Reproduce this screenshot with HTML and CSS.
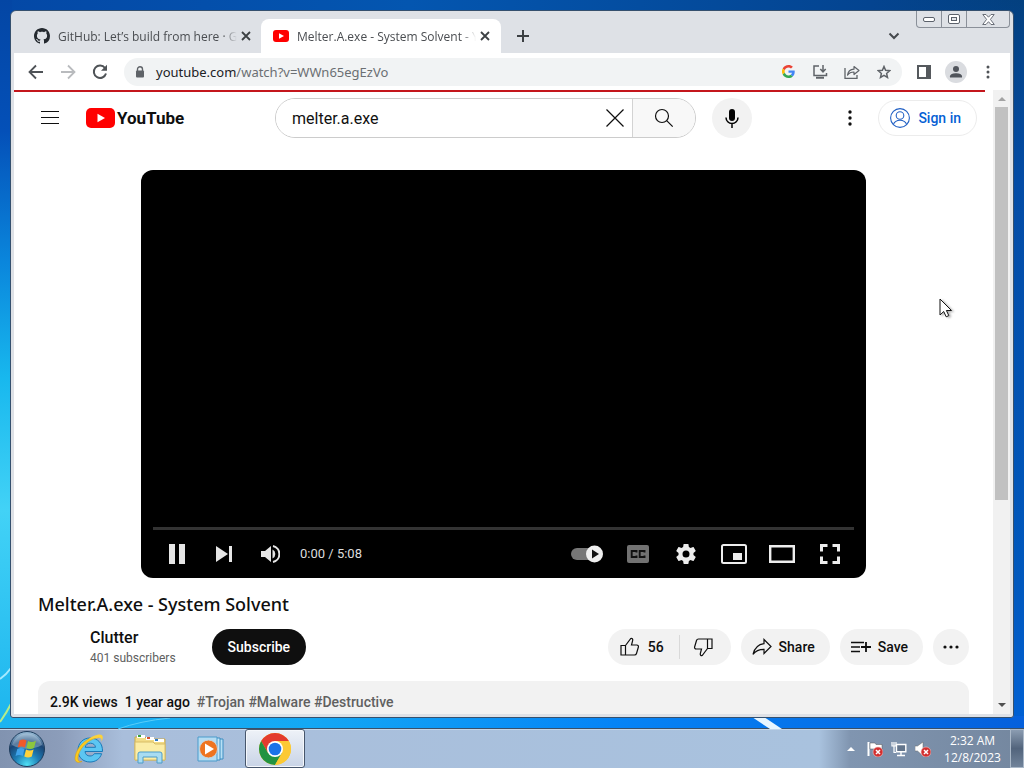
FILE: index.html
```html
<!DOCTYPE html>
<html lang="en">
<head>
    <meta charset="UTF-8">
    <meta name="viewport" content="width=device-width, initial-scale=1.0">
    <title>Melter.A.exe - System Solvent - YouTube</title>
    <link rel="stylesheet" href="styles.css">
</head>
<body>
<div class="desktop">
    <svg class="streaks" viewBox="0 0 1024 768" preserveAspectRatio="none" aria-hidden="true">
        <path d="M0 679q6-4 11-11" stroke="#a6eaff" stroke-width="2" fill="none"/>
        <path d="M0 722q7-10 12-20" stroke="#b4ec8c" stroke-width="2" fill="none"/>
        <path d="M118 729q22-8 52-11" stroke="#58cdf9" stroke-width="1" fill="none"/>
        <path d="M752 717h12l18 12h-12z" fill="#e8f6ff"/>
    </svg>
    <div class="window">
        <div class="tabstrip">
            <div class="tab">
                <svg width="16" height="16" viewBox="0 0 16 16"><path fill="#24292f" d="M8 0C3.58 0 0 3.58 0 8c0 3.54 2.29 6.53 5.47 7.59.4.07.55-.17.55-.38 0-.19-.01-.82-.01-1.49-2.01.37-2.53-.49-2.69-.94-.09-.23-.48-.94-.82-1.13-.28-.15-.68-.52-.01-.53.63-.01 1.08.58 1.23.82.72 1.21 1.87.87 2.33.66.07-.52.28-.87.51-1.07-1.78-.2-3.64-.89-3.64-3.95 0-.87.31-1.59.82-2.15-.08-.2-.36-1.02.08-2.12 0 0 .67-.21 2.2.82.64-.18 1.32-.27 2-.27s1.36.09 2 .27c1.53-1.04 2.2-.82 2.2-.82.44 1.1.16 1.92.08 2.12.51.56.82 1.27.82 2.15 0 3.07-1.87 3.75-3.65 3.95.29.25.54.73.54 1.48 0 1.07-.01 1.93-.01 2.2 0 .21.15.46.55.38A8.01 8.01 0 0 0 16 8c0-4.42-3.58-8-8-8z"/></svg>
                <span class="tab-title">GitHub: Let’s build from here · GitHub</span>
                <button class="tab-close" aria-label="Close tab"><svg width="10" height="10" viewBox="0 0 10 10"><path d="M1 1l8 8M9 1l-8 8" stroke="#3c4043" stroke-width="1.8"/></svg></button>
            </div>
            <div class="tab tab-active">
                <svg width="16" height="16" viewBox="0 0 16 16"><rect y="2" width="16" height="12" rx="3" fill="#f00"/><path d="M6 5.300l5 2.700-5 2.700z" fill="#fff"/></svg>
                <span class="tab-title">Melter.A.exe - System Solvent - YouTube</span>
                <button class="tab-close" aria-label="Close tab"><svg width="10" height="10" viewBox="0 0 10 10"><path d="M1 1l8 8M9 1l-8 8" stroke="#3c4043" stroke-width="1.8"/></svg></button>
            </div>
            <button class="tab-new" aria-label="New tab"><svg width="12" height="12" viewBox="0 0 12 12"><path d="M6 0v12M0 6h12" stroke="#3c4043" stroke-width="2"/></svg></button>
            <button class="tab-search" aria-label="Search tabs"><svg width="12" height="8" viewBox="0 0 12 8"><path d="M1.500 1.500l4.500 4.500 4.500-4.500" stroke="#45494d" stroke-width="2" fill="none"/></svg></button>
        </div>
        <div class="window-controls">
            <button aria-label="Minimize"><svg width="12" height="5" viewBox="0 0 12 5"><rect x=".5" y=".5" width="11" height="4" rx="1.500" fill="#fff" stroke="#5b616b"/></svg></button>
            <button aria-label="Restore"><svg width="12" height="10" viewBox="0 0 12 10"><rect x=".5" y=".5" width="11" height="9" rx="1.500" fill="#fff" stroke="#5b616b"/><rect x="3.500" y="3.500" width="5" height="3" fill="#e4e6ea" stroke="#5b616b"/></svg></button>
            <button class="win-close" aria-label="Close"><svg width="13" height="11" viewBox="0 0 13 11"><path d="M.8.5h3.200l2.500 2.700L9 .5h3.200L8.400 5.400l3.900 5.100H9L6.500 7.700 4 10.500H.7l3.900-5.100z" fill="#fff" stroke="#5b616b" stroke-width=".9"/></svg></button>
        </div>
        <div class="toolbar">
            <button class="nav-btn" aria-label="Back"><svg width="16" height="16" viewBox="0 0 16 16"><path d="M15 8H2M8 1.500L1.500 8 8 14.500" stroke="#4f5357" stroke-width="1.800" fill="none"/></svg></button>
            <button class="nav-btn" aria-label="Forward" disabled><svg width="16" height="16" viewBox="0 0 16 16"><path d="M1 8h13M8 1.500L14.500 8 8 14.500" stroke="#b9bbbe" stroke-width="1.800" fill="none"/></svg></button>
            <button class="nav-btn" aria-label="Reload"><svg width="16" height="16" viewBox="0 0 16 16"><path d="M13 4A6.200 6.200 0 1 0 14 9.500" stroke="#4f5357" stroke-width="2" fill="none"/><path d="M15 .8v6H9z" fill="#4f5357"/></svg></button>
            <div class="omnibox">
                <svg width="10" height="12" viewBox="0 0 10 12"><path d="M2.500 5V3.200a2.500 2.500 0 0 1 5 0V5" stroke="#5f6368" stroke-width="1.400" fill="none"/><rect x="1" y="4.500" width="8" height="7" rx="1" fill="#5f6368"/></svg>
                <div class="url" role="textbox" aria-label="Address">youtube.com<span class="url-path">/watch?v=WWn65egEzVo</span></div>
                <button class="omni-btn" aria-label="Search with Google"><svg width="13" height="13" viewBox="0 0 48 48"><path fill="#ea4335" d="M24 9.500c3.540 0 6.710 1.220 9.210 3.600l6.850-6.850C35.900 2.380 30.470 0 24 0 14.620 0 6.510 5.380 2.560 13.220l7.980 6.190C12.430 13.720 17.740 9.500 24 9.500z"/><path fill="#4285f4" d="M46.980 24.550c0-1.570-.15-3.090-.38-4.550H24v9.020h12.940c-.58 2.960-2.260 5.480-4.780 7.180l7.730 6c4.510-4.180 7.090-10.360 7.090-17.650z"/><path fill="#fbbc05" d="M10.530 28.590a14.500 14.500 0 0 1 0-9.180l-7.980-6.190a24 24 0 0 0 0 21.560z"/><path fill="#34a853" d="M24 48c6.480 0 11.930-2.130 15.890-5.810l-7.730-6c-2.150 1.450-4.920 2.300-8.160 2.300-6.260 0-11.570-4.220-13.470-9.910l-7.980 6.190C6.510 42.620 14.620 48 24 48z"/></svg></button>
                <button class="omni-btn" aria-label="Install app"><svg width="16" height="14" viewBox="0 0 16 14"><path d="M7 1H2v9.500h12.500V8" stroke="#5f6368" stroke-width="1.500" fill="none"/><path d="M4 12.800h8" stroke="#5f6368" stroke-width="2"/><path d="M11 0v6M8.300 4L11 6.800 13.700 4" stroke="#5f6368" stroke-width="1.500" fill="none"/></svg></button>
                <button class="omni-btn" aria-label="Share this page"><svg width="16" height="14" viewBox="0 0 16 14"><path d="M1 3v10.300h12V10" stroke="#5f6368" stroke-width="1.300" fill="none"/><path d="M3.500 10.200C4 6.500 6.500 4.300 10 4.200V1.500l5 4-5 4V7c-3 0-5 1-6.500 3.200z" stroke="#5f6368" stroke-width="1.200" fill="none" stroke-linejoin="round"/></svg></button>
                <button class="omni-btn" aria-label="Bookmark"><svg width="14" height="14" viewBox="0 0 14 14"><path d="M7 1.500l1.600 3.800 4.100.4-3.100 2.700.9 4L7 10.300l-3.500 2.100.9-4L1.300 5.700l4.100-.4z" stroke="#5f6368" stroke-width="1.500" fill="none"/></svg></button>
            </div>
            <button class="nav-btn" aria-label="Side panel"><svg width="14" height="14" viewBox="0 0 14 14"><rect x="1" y="1" width="12" height="12" fill="#fff" stroke="#55595d" stroke-width="2"/><path d="M9 0h5v14H9z" fill="#55595d"/></svg></button>
            <button class="nav-btn" aria-label="Profile"><svg width="22" height="22" viewBox="0 0 22 22"><circle cx="11" cy="11" r="11" fill="#dadce0"/><circle cx="11" cy="8" r="3" fill="#51555c"/><path d="M5 16.500v-1.200C5 13 8.500 12.200 11 12.200s6 .8 6 3.100v1.200z" fill="#51555c"/></svg></button>
            <button class="nav-btn" aria-label="Menu"><svg width="4" height="14" viewBox="0 0 4 14"><g fill="#4f5357"><circle cx="2" cy="2" r="1.500"/><circle cx="2" cy="7" r="1.500"/><circle cx="2" cy="12" r="1.500"/></g></svg></button>
        </div>
        <div class="viewport">
            <div class="page">
                <div class="load-bar"></div>
                <header class="masthead">
                    <button class="guide" aria-label="Guide"><svg width="18" height="14" viewBox="0 0 18 14"><path d="M0 .5h18M0 6.500h18M0 12.500h18" stroke="#0f0f0f"/></svg></button>
                    <a class="logo" href="#" aria-label="YouTube home">
                        <svg width="29" height="20" viewBox="0 0 29 20"><rect width="29" height="20" rx="5" fill="#f00"/><path d="M11.500 5.700l7.500 4.300-7.500 4.300z" fill="#fff"/></svg>
                        <span class="logo-text">YouTube</span>
                    </a>
                    <form class="search">
                        <input class="search-input" type="text" value="melter.a.exe" aria-label="Search">
                        <button class="search-clear" type="button" aria-label="Clear"><svg width="18" height="18" viewBox="0 0 18 18"><path d="M.5.5l17 17M17.500.5l-17 17" stroke="#0f0f0f" stroke-width="1.200"/></svg></button>
                        <button class="search-submit" type="button" aria-label="Search"><svg width="20" height="20" viewBox="0 0 20 20"><circle cx="8" cy="8" r="6.500" stroke="#0f0f0f" stroke-width="1.200" fill="none"/><path d="M12.700 12.700l6 6" stroke="#0f0f0f" stroke-width="1.200"/></svg></button>
                    </form>
                    <button class="mic" aria-label="Search with your voice"><svg width="14" height="19" viewBox="0 0 14 19"><rect x="4" width="6" height="12" rx="3" fill="#030303"/><path d="M1 8.500a6 6 0 0 0 12 0M7 14.500V19" stroke="#030303" stroke-width="1.500" fill="none"/></svg></button>
                    <button class="settings" aria-label="Settings"><svg width="4" height="16" viewBox="0 0 4 16"><g fill="#0f0f0f"><circle cx="2" cy="2" r="1.700"/><circle cx="2" cy="8" r="1.700"/><circle cx="2" cy="14" r="1.700"/></g></svg></button>
                    <a class="sign-in" href="#">
                        <svg width="20" height="20" viewBox="0 0 20 20"><g stroke="#2160c4" fill="none" stroke-width="1.100"><circle cx="10" cy="10" r="9.400"/><circle cx="10" cy="7.500" r="3.800"/><path d="M3.300 16.600c1.200-3 3.800-4.300 6.700-4.300s5.500 1.300 6.700 4.300"/></g></svg>
                        Sign in
                    </a>
                </header>
                <div class="player">
                    <div class="progress"></div>
                    <div class="controls">
                        <button aria-label="Pause"><svg width="16" height="20" viewBox="0 0 16 20"><path d="M0 0h6v20H0zM10 0h6v20h-6z" fill="#e6e6e6"/></svg></button>
                        <button aria-label="Next"><svg width="16" height="16" viewBox="0 0 16 16"><path d="M0 0l12 8-12 8zM13 0h3v16h-3z" fill="#e6e6e6"/></svg></button>
                        <button aria-label="Mute"><svg width="19" height="18" viewBox="0 0 19 18"><path d="M0 6v6h4l6 5V1L4 6z" fill="#e6e6e6"/><path d="M11.500 4.500v9a5 5 0 0 0 0-9z" fill="#e6e6e6"/><path d="M12 1a8.200 8.200 0 0 1 0 16" stroke="#e6e6e6" stroke-width="2" fill="none"/></svg></button>
                        <span class="time">0:00 / 5:08</span>
                        <button class="push" aria-label="Autoplay"><svg width="34" height="18" viewBox="0 0 34 18"><rect x="1" y="3" width="28" height="12" rx="6" fill="#777"/><circle cx="24.500" cy="9" r="8.500" fill="#efefef"/><path d="M22 4.500L29 9l-7 4.500z" fill="#111"/></svg></button>
                        <button aria-label="Subtitles"><svg width="22" height="18" viewBox="0 0 22 18"><rect width="22" height="18" rx="2" fill="#727272"/><path d="M9.500 7.500V6H4.700v6h4.800v-1.500M17.500 7.500V6h-4.800v6h4.800v-1.500" stroke="#111" stroke-width="1.900" fill="none"/></svg></button>
                        <button aria-label="Settings"><svg width="20" height="20" viewBox="2 2 20 20"><path fill="#ededed" d="M19.430 12.980c.04-.32.07-.64.07-.98s-.03-.66-.07-.98l2.110-1.650c.19-.15.240-.42.120-.64l-2-3.460c-.12-.22-.39-.3-.61-.22l-2.490 1c-.52-.4-1.080-.73-1.690-.98l-.38-2.650C14.460 2.180 14.250 2 14 2h-4c-.25 0-.46.18-.49.42l-.38 2.650c-.61.25-1.170.59-1.690.98l-2.490-1c-.23-.09-.49 0-.61.22l-2 3.460c-.13.22-.07.490.12.640l2.110 1.650c-.04.32-.07.65-.07.98s.03.66.07.98l-2.110 1.650c-.19.15-.24.42-.12.64l2 3.460c.12.22.39.3.61.22l2.490-1c.52.4 1.080.73 1.690.98l.38 2.650c.03.24.24.42.49.42h4c.25 0 .46-.18.49-.42l.38-2.650c.61-.25 1.170-.59 1.690-.98l2.490 1c.23.09.49 0 .61-.22l2-3.460c.12-.22.07-.49-.12-.64zM12 15.500a3.500 3.500 0 1 1 0-7 3.500 3.500 0 0 1 0 7z"/></svg></button>
                        <button aria-label="Miniplayer"><svg width="26" height="20" viewBox="0 0 26 20"><rect x="1" y="1" width="24" height="18" rx="1.500" stroke="#ededed" stroke-width="2" fill="none"/><path d="M12 9h9v7h-9z" fill="#ededed"/></svg></button>
                        <button aria-label="Theater mode"><svg width="26" height="18" viewBox="0 0 26 18"><path d="M1.200 1.200h23.600v15.600H1.200z" stroke="#ededed" stroke-width="2.400" fill="none"/></svg></button>
                        <button aria-label="Full screen"><svg width="20" height="20" viewBox="0 0 20 20"><path d="M1.500 7.500v-6h6M12.500 1.500h6v6M18.500 12.500v6h-6M7.500 18.500h-6v-6" stroke="#ededed" stroke-width="3" fill="none"/></svg></button>
                    </div>
                </div>
                <h1 class="video-title">Melter.A.exe - System Solvent</h1>
                <div class="meta">
                    <div class="owner">
                        <a class="channel" href="#">Clutter</a>
                        <span class="subs">401 subscribers</span>
                    </div>
                    <button class="subscribe">Subscribe</button>
                    <div class="actions">
                        <div class="rating">
                            <button class="like"><svg width="20" height="20" viewBox="0 0 20 20"><path d="M1 8.500h4.500v9.500H1zM5.500 8.500l5.300-7c1.200-.5 2.200.5 1.900 1.800L11.500 8h5.300c1.200 0 1.900 1 1.600 2l-1.900 6.500c-.3 1-1 1.500-2 1.500h-9" stroke="#0f0f0f" stroke-width="1.200" fill="none"/></svg>56</button>
                            <button class="dislike" aria-label="Dislike"><svg width="20" height="20" viewBox="0 0 20 20"><path d="M19 11.500h-4.500V2H19zM14.500 11.500l-5.300 7c-1.200.5-2.200-.5-1.900-1.800L8.500 12H3.200c-1.200 0-1.900-1-1.600-2l1.900-6.500C3.800 2.500 4.500 2 5.500 2h9" stroke="#0f0f0f" stroke-width="1.200" fill="none"/></svg></button>
                        </div>
                        <button class="pill"><svg width="20" height="18" viewBox="0 0 20 18"><path d="M12 1.500l7 7-7 7v-4.200c-5 0-8.500 1.500-11 5C2.500 10.500 5.500 6.500 12 5.700z" stroke="#0f0f0f" stroke-width="1.200" fill="none"/></svg>Share</button>
                        <button class="pill"><svg width="20" height="14" viewBox="0 0 20 14"><path d="M0 2.500h13M0 7h9M0 11.500h9" stroke="#0f0f0f" stroke-width="1.300"/><path d="M15 2v10M10 7h10" stroke="#0f0f0f" stroke-width="1.800"/></svg>Save</button>
                        <button class="more" aria-label="More actions"><svg width="16" height="4" viewBox="0 0 16 4"><g fill="#0f0f0f"><circle cx="2" cy="2" r="1.600"/><circle cx="8" cy="2" r="1.600"/><circle cx="14" cy="2" r="1.600"/></g></svg></button>
                    </div>
                </div>
                <div class="description">
                    <span>2.9K views</span>
                    <span>1 year ago</span>
                    <span class="hashtags"><a href="#">#Trojan</a> <a href="#">#Malware</a> <a href="#">#Destructive</a></span>
                </div>
            </div>
            <div class="scrollbar" aria-hidden="true">
                <svg width="8" height="4" viewBox="0 0 8 4"><path d="M0 4l4-4 4 4z" fill="#a3a3a3"/></svg>
                <div class="track"><div class="thumb"></div></div>
                <svg width="8" height="4" viewBox="0 0 8 4"><path d="M0 0l4 4 4-4z" fill="#505050"/></svg>
            </div>
        </div>
    </div>
    <svg class="cursor" width="16" height="22" viewBox="0 0 16 22" aria-hidden="true"><path d="M1 1v16l3.700-3.500 2.500 5.300 2.600-1.200-2.400-5.100h5.100z" fill="#fff" stroke="#111"/></svg>
</div>
<footer class="taskbar">
    <button class="start" aria-label="Start">
        <svg width="38" height="38" viewBox="0 0 38 38">
            <defs>
                <radialGradient id="orb" cx=".5" cy=".95" r=".9"><stop offset="0" stop-color="#4fe0f5"/><stop offset=".4" stop-color="#1d7db5"/><stop offset=".75" stop-color="#1a4474"/><stop offset="1" stop-color="#8fb3cf"/></radialGradient>
            </defs>
            <circle cx="19" cy="19" r="17.500" fill="url(#orb)" stroke="#1d3c5c"/>
            <path d="M4 15a15.500 15.500 0 0 1 30 0c-9 5-21 5-30 0z" fill="#d5e6f2" opacity=".35"/>
            <path d="M11.500 10.500c2.500-1.500 5-1.500 7 0l-1.600 7c-2.300-1.300-4.700-1.300-7.200 0z" fill="#f0592a"/>
            <path d="M20 11c2.500 1.300 5 1.200 8-.3l-2 7.300c-2.500 1.300-5 1.300-7.600 0z" fill="#8cc63f"/>
            <path d="M9.300 19c2.500-1.400 5-1.300 7.200 0l-1.800 7c-2.200-1.400-4.700-1.400-7.200 0z" fill="#3fa2ea"/>
            <path d="M18 19.600c2.500 1.300 5 1.300 7.600 0l-1.800 7c-2.500 1.400-5 1.300-7.500 0z" fill="#ffd23a"/>
        </svg>
    </button>
    <button class="task" aria-label="Internet Explorer">
        <svg width="32" height="32" viewBox="0 0 32 32">
            <path d="M29.500 18.500H12c.3 3 2.300 4.500 5 4.500 2 0 3.400-.8 4.300-2.300h7.300C27 26 22.500 29 17 29 10 29 5 24.300 5 17.300S10 5 17 5c8 0 12.800 5.500 12.500 13.500zM12.200 14.300h10.300c-.3-2.500-2.300-4.100-5.100-4.100s-4.800 1.600-5.200 4.100z" fill="#5cc6f2" stroke="#1b79b8"/>
            <path d="M7 18C11 11 18 5.500 26 4.500c-2-1-5-.8-8 .2C9 8.500 2.500 17.500 2 25c-.1 4 2.500 5.500 7 3.500-4.500.5-5.500-3-2-10.500z" fill="#fbc91e" stroke="#d39a10" stroke-width=".5"/>
            <path d="M24 5c3-1 5 0 4.500 3.500C31 4 30 1 25.500 1.500 22 2 18 4 15 6.500 18 5.500 21 5 24 5z" fill="#fbd23c"/>
        </svg>
    </button>
    <button class="task" aria-label="Windows Explorer">
        <svg width="32" height="30" viewBox="0 0 32 30">
            <path d="M1 3h10l2 2h18v21H1z" fill="#f2dc86" stroke="#c9a94e"/>
            <path d="M3 1h8v3H3z" fill="#fff"/><path d="M4 1h3v2H4z" fill="#3aa33a"/>
            <path d="M12 3h8v3h-8z" fill="#fff"/><path d="M13 3h3v2h-3z" fill="#d9512c"/>
            <path d="M20 5h10v3H20z" fill="#fff"/><path d="M21 5h3v2h-3z" fill="#2f7cc9"/>
            <path d="M1 8h18l2 2h10v16H1z" fill="#fbeda6" stroke="#d8bd66"/>
            <path d="M4 29V20q0-2 2-2h20q2 0 2 2v9h-5v-6H9v6z" fill="#a8dcf2" stroke="#4d9cc9"/>
        </svg>
    </button>
    <button class="task" aria-label="Windows Media Player">
        <svg width="28" height="26" viewBox="0 0 28 26">
            <path d="M8 3h18v20H8z" fill="#b8e0f5" stroke="#3d8ec2"/><path d="M5 2h18v22H5z" fill="#c5e6f7" stroke="#3d8ec2"/><path d="M1 1h19v24H1z" fill="#b5dcf2" stroke="#4b9bcb"/>
            <circle cx="11.500" cy="13" r="9" fill="#ee7420" stroke="#c9d2d9"/><path d="M8 7.500l9 5.500-9 5.500z" fill="#fff"/>
        </svg>
    </button>
    <button class="task task-active" aria-label="Google Chrome">
        <svg width="32" height="32" viewBox="0 0 48 48">
            <circle cx="24" cy="24" r="24" fill="#ffca28"/>
            <path d="M24 12h20.780A24 24 0 0 0 3.220 12l10.390 18z" fill="#e33b2e"/>
            <path d="M13.610 30L3.220 12A24 24 0 0 0 24 48l10.390-18z" fill="#229342"/>
            <path d="M24 12h20.780A24 24 0 0 1 24 48l10.390-18z" fill="#fcc934"/>
            <circle cx="24" cy="24" r="12" fill="#fff"/><circle cx="24" cy="24" r="9.500" fill="#1a73e8"/>
        </svg>
    </button>
    <div class="tray">
        <button aria-label="Show hidden icons"><svg width="8" height="4" viewBox="0 0 8 4"><path d="M0 4l4-4 4 4z" fill="#fff"/></svg></button>
        <button aria-label="Action Center"><svg width="16" height="16" viewBox="0 0 16 16"><path d="M1.500 1v14" stroke="#fff" stroke-width="2"/><path d="M3 2h5l1 1.500h6V9H9L8 8H3z" fill="#fff" stroke="#555" stroke-width=".5"/><circle cx="11" cy="11" r="5" fill="#d32f2f" stroke="#f2c4c4" stroke-width=".6"/><path d="M9 9l4 4M13 9l-4 4" stroke="#fff" stroke-width="1.500"/></svg></button>
        <button aria-label="Network"><svg width="16" height="16" viewBox="0 0 16 16"><path d="M5.500 3.500h9.300v7.300H5.500zM10 11v3M6 14.500h8" stroke="#fff" stroke-width="1.400" fill="#63758c"/><path d="M1 1v4h4V1M3 1v4M3 5v6.500h2" stroke="#fff" stroke-width="1.200" fill="none"/></svg></button>
        <button aria-label="Volume"><svg width="16" height="16" viewBox="0 0 16 16"><path d="M0 5v5h2.500L8 15V1L2.500 5z" fill="#fff" stroke="#666" stroke-width=".5"/><circle cx="11" cy="11" r="5" fill="#d32f2f" stroke="#f2c4c4" stroke-width=".6"/><path d="M9 9l4 4M13 9l-4 4" stroke="#fff" stroke-width="1.500"/></svg></button>
    </div>
    <div class="clock"><span>2:32 AM</span><span>12/8/2023</span></div>
    <button class="show-desktop" aria-label="Show desktop"></button>
</footer>
</body>
</html>
```
FILE: styles.css
```css
* {
    box-sizing: border-box;
}

body {
    margin: 0;
    height: 100vh;
    display: flex;
    flex-direction: column;
    overflow: hidden;
    font-family: Roboto, "Liberation Sans", sans-serif;
    color: #0f0f0f;
}

button {
    display: flex;
    align-items: center;
    justify-content: center;
    padding: 0;
    border: none;
    background: none;
    font: inherit;
    color: inherit;
}

a {
    color: inherit;
    text-decoration: none;
}

svg {
    flex: none;
}

/* desktop */
.desktop {
    position: relative;
    flex: 1;
    min-height: 0;
    padding: 10px;
    background:
        linear-gradient(to right, #1cb4f0, #14a8f4 30%, #0584f6 60%, #0560dc) bottom / 100% 12px no-repeat,
        linear-gradient(to bottom, #0446a4, #0450b8 18%, #0a86dc 36%, #18b8ee 52%, #42d2f6 70%, #1cb4ee) left / 12px 100% no-repeat,
        linear-gradient(to right, #0448a6, #0456b0 40%, #044490 85%, transparent) top / 100% 12px no-repeat,
        linear-gradient(to bottom, #03407f, #044ca6 25%, #0058be 80%, #0060d4);
}

.streaks {
    position: absolute;
    left: 0;
    top: 0;
    width: 100vw;
    height: 100vh;
}

.window {
    position: relative;
    height: 100%;
    display: flex;
    flex-direction: column;
    padding: 0 3px 3px;
    border: 1px solid #35506e;
    border-radius: 6px 6px 3px 3px;
    background: #dee1e6;
    overflow: hidden;
}

.tabstrip {
    display: flex;
    height: 42px;
    padding: 8px 110px 0 12px;
    font-family: "Open Sans", "Noto Sans", sans-serif;
    font-size: 12px;
    color: #4a4d51;
}

.tab {
    display: flex;
    align-items: center;
    gap: 8px;
    width: 235px;
    padding: 0 10px 0 8px;
}

.tab-active {
    width: 240px;
    padding: 0 11px 0 12px;
    border-radius: 8px 8px 0 0;
    background: #fff;
}

.tab-title {
    flex: 1;
    margin-right: -4px;
    overflow: hidden;
    white-space: nowrap;
    -webkit-mask-image: linear-gradient(to right, #000 92%, transparent);
    mask-image: linear-gradient(to right, #000 92%, transparent);
}

.tab-new {
    width: 44px;
}

.tab-search {
    margin-left: auto;
}

.window-controls {
    position: absolute;
    top: 0;
    right: 3px;
    display: flex;
    height: 17px;
    border: 1px solid #8a9099;
    border-top: none;
    border-radius: 0 0 4px 4px;
}

.window-controls button {
    width: 25px;
    border-right: 1px solid #8a9099;
}

.window-controls .win-close {
    width: 42px;
    border-right: none;
}

.toolbar {
    display: flex;
    align-items: center;
    height: 37px;
    padding: 0 6px;
    background: #fff;
}

.nav-btn {
    width: 32px;
    height: 28px;
}

.omnibox {
    flex: 1;
    display: flex;
    align-items: center;
    height: 28px;
    margin: 0 6px 0 8px;
    padding: 0 2px 0 11px;
    border-radius: 14px;
    background: #f1f3f4;
}

.url {
    flex: 1;
    margin-left: 11px;
    font-family: "Noto Sans", "Open Sans", sans-serif;
    font-size: 13px;
    color: #202124;
}

.url-path {
    color: #6b6f73;
}

.omni-btn {
    width: 32px;
    height: 28px;
}

/* page area */
.viewport {
    flex: 1;
    display: flex;
    min-height: 0;
    background: #fff;
}

.page {
    flex: 1;
    min-width: 0;
    overflow: hidden;
}

.load-bar {
    height: 2px;
    margin-right: 8px;
    background: #c4161c;
}

.masthead {
    display: flex;
    align-items: center;
    height: 52px;
    padding: 0 16px 0 27px;
}

.guide {
    width: 18px;
    height: 40px;
}

.logo {
    display: flex;
    align-items: center;
    gap: 2px;
    width: 92px;
    margin-left: 27px;
}

.logo-text {
    font-size: 17px;
    font-weight: 700;
    line-height: 20px;
}

.search {
    flex: 1;
    display: flex;
    height: 40px;
    margin-left: 97px;
    border: 1px solid #ccc;
    border-radius: 20px;
    overflow: hidden;
}

.search-input {
    flex: 1;
    min-width: 0;
    padding: 0 0 0 16px;
    border: none;
    outline: none;
    font: 16px Roboto, sans-serif;
    color: #111;
}

.search-clear {
    width: 34px;
}

.search-submit {
    width: 63px;
    border-left: 1px solid #d3d3d3;
    background: #f8f8f8;
}

.mic {
    width: 40px;
    height: 40px;
    margin-left: 16px;
    border-radius: 50%;
    background: #f2f2f2;
}

.settings {
    width: 40px;
    height: 40px;
    margin: 0 8px 0 78px;
}

.sign-in {
    display: flex;
    align-items: center;
    gap: 8px;
    height: 36px;
    padding: 0 15px 0 11px;
    border: 1px solid #ececec;
    border-radius: 18px;
    font-size: 14px;
    font-weight: 500;
    color: #065fd4;
}

.player {
    display: flex;
    flex-direction: column;
    justify-content: flex-end;
    aspect-ratio: 16 / 9;
    margin: 26px 127px 0;
    padding: 0 12px;
    border-radius: 12px;
    background: #000;
}

.progress {
    height: 3px;
    background: #333;
}

.controls {
    display: flex;
    align-items: center;
    height: 48px;
    color: #ddd;
}

.controls button {
    width: 47px;
    height: 48px;
}

.controls .push {
    width: 54px;
    margin-left: auto;
}

.controls .push ~ button {
    width: 48px;
}

.time {
    margin-left: 6px;
    font-size: 13px;
}

.video-title {
    margin: 12px 24px 0;
    font-family: "Noto Sans", "Open Sans", sans-serif;
    font-size: 18px;
    font-weight: 500;
    line-height: 28px;
}

.meta {
    display: flex;
    align-items: center;
    margin: 9px 24px 0;
    height: 40px;
    font-size: 14px;
    font-weight: 500;
}

.owner {
    display: flex;
    flex-direction: column;
    margin-left: 52px;
}

.channel {
    font-size: 16px;
    line-height: 22px;
}

.subs {
    font-size: 12px;
    font-weight: 400;
    line-height: 18px;
    color: #606060;
}

.subscribe {
    height: 36px;
    margin-left: 36px;
    padding: 0 16px;
    border-radius: 18px;
    background: #0f0f0f;
    color: #fff;
}

.actions {
    display: flex;
    gap: 10px;
    margin-left: auto;
    height: 36px;
}

.rating,
.pill,
.more {
    border-radius: 18px;
    background: #f2f2f2;
}

.rating {
    display: flex;
    align-items: center;
}

.like {
    gap: 8px;
    height: 24px;
    padding: 0 15px 0 12px;
    border-right: 1px solid #d9d9d9;
}

.dislike {
    height: 36px;
    padding: 0 18px 0 13px;
}

.pill {
    gap: 7px;
    padding: 0 15px 0 11px;
}

.more {
    width: 36px;
}

.description {
    display: flex;
    gap: 7px;
    height: 120px;
    margin: 14px 24px 0;
    padding: 11px 12px;
    border-radius: 12px;
    background: #f2f2f2;
    font-size: 14px;
    font-weight: 500;
    line-height: 20px;
}

.hashtags {
    color: #606060;
}

.scrollbar {
    display: flex;
    flex-direction: column;
    align-items: center;
    width: 17px;
    padding: 7px 0;
    background: #f1f1f1;
}

.track {
    flex: 1;
    align-self: stretch;
    margin: 6px 2px;
}

.thumb {
    height: calc(100% * 2 / 3);
    background: #c1c1c1;
}

.cursor {
    position: absolute;
    left: 939px;
    top: 298px;
    filter: drop-shadow(2px 1px 1px rgba(0, 0, 0, 0.3));
}

/* taskbar */
.taskbar {
    display: flex;
    height: 40px;
    border-top: 1px solid #3a5068;
    background: linear-gradient(to right, #8193b0, #8c9dba 6%, #a9bedb 12%, #a9c2de 80%, #8095b0 83%, #74879f);
    box-shadow: inset 0 1px 0 #c3d6ea;
}

.start {
    width: 54px;
}

.task {
    width: 60px;
    margin-left: 1px;
}

.start + .task {
    margin-left: 5px;
}

.task-active {
    border: 1px solid #47566c;
    border-radius: 3px;
    margin-left: 4px;
    background: linear-gradient(#eef2f8, #c9d4e6);
    box-shadow: inset 0 0 0 1px #f5f8fc;
}

.tray {
    display: flex;
    margin-left: auto;
}

.tray button {
    width: 24px;
}

.clock {
    display: flex;
    flex-direction: column;
    justify-content: center;
    width: 75px;
    font-family: "Open Sans", "Noto Sans", sans-serif;
    font-size: 12px;
    line-height: 17px;
    text-align: center;
    color: #fff;
}

.show-desktop {
    width: 14px;
    border: 1px solid #aab8c8;
    background: linear-gradient(to bottom, #8b9cb1, #52647c 50%, #71839a);
}
```
